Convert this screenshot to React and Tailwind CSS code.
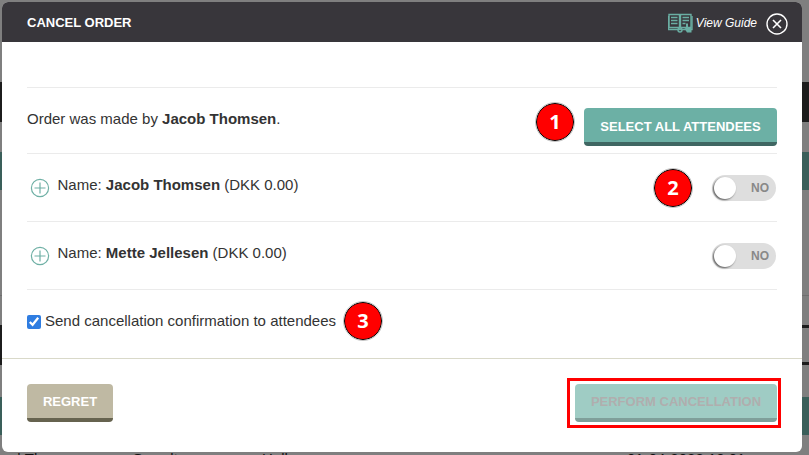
import React from 'react';

const FONT = "font-['Liberation_Sans',Arial,sans-serif]";

const Badge = ({ n }) => (
    <div className="w-[38px] h-[38px] shrink-0 rounded-full bg-[#ff0000] border-[1.5px] border-black outline outline-1 outline-[#c4c4c4] flex items-center justify-center text-white font-bold text-[20px] font-['Open_Sans',sans-serif]">
        {n}
    </div>
);

const PlusIcon = () => (
    <svg width="20" height="20" viewBox="0 0 20 20" fill="none" stroke="#6fb0a5" strokeWidth="1.2" className="shrink-0">
        <circle cx="10" cy="10" r="8.6" />
        <path d="M10 4.5v11M4.5 10h11" />
    </svg>
);

const GuideIcon = () => (
    <svg width="25" height="20" viewBox="0 0 25 20" fill="none" stroke="#6aaea3" strokeWidth="1.4">
        <path d="M1 1.5h10.5v13H1zM12.5 1.5H23v13H12.5z" />
        <path d="M0.5 3v13.5h23.500V3" />
        <path d="M3 4.500h6.500M3 7.500h6.500M3 10.500h6.500M14.500 4.500h6.500M14.500 7.500h6.500M14.500 10.500h3" />
        <circle cx="12" cy="17" r="2" />
        <path d="M18 10.500h2v3.500l3.500 1v4.500h-4.500l-2.500-4 1.500-.5z" fill="#6aaea3" stroke="none" />
    </svg>
);

const CloseIcon = () => (
    <svg width="22" height="22" viewBox="0 0 22 22" fill="none" stroke="#ffffff" strokeWidth="1.4" className="mt-px">
        <circle cx="11" cy="11" r="10" />
        <path d="M7 7l8 8M15 7l-8 8" strokeWidth="1.6" />
    </svg>
);

const Toggle = () => (
    <div className="w-16 h-[26px] rounded-full bg-[#dedede] flex items-center justify-between pl-[2px] pr-[7px]">
        <div className="w-[22px] h-[22px] rounded-full bg-white shadow-[-1px_1px_2px_rgba(0,0,0,0.6)]"></div>
        <span className="text-xs font-bold text-[#888888]">NO</span>
    </div>
);

const AttendeeRow = ({ name, children }) => (
    <div className="h-[68px] border-b border-[#ebebeb] flex items-center justify-between">
        <div className="flex items-center pl-[3px] gap-[7.5px]">
            <PlusIcon />
            <span className="mb-1">
                Name: <b>{name}</b> (DKK 0.00)
            </span>
        </div>
        {children}
    </div>
);

const Backdrop = () => (
    <div className="h-[455px] bg-[#7f7f7f] overflow-hidden flex flex-col">
        <div className="h-[82px] shrink-0"></div>
        <div className="h-10 shrink-0 bg-[#1c1c1c]"></div>
        <div className="h-[30px] shrink-0"></div>
        <div className="h-[38px] shrink-0 bg-[#3a5f5a]"></div>
        <div className="h-[106px] shrink-0 border-b border-[#6f6f6f]"></div>
        <div className="h-[32px] shrink-0 border-b-[3px] border-[#1c1c1c]"></div>
        <div className="h-[37px] shrink-0 border-b-[3px] border-[#1c1c1c] flex">
            <div className="w-[2px] bg-[#1c1c1c]"></div>
        </div>
        <div className="h-8 shrink-0"></div>
        <div className="h-[38px] shrink-0 bg-[#3a5f5a]"></div>
        {/* page text peeking out under the modal */}
        <div className="h-[16px] shrink-0"></div>
        <div className="shrink-0 flex text-[15px] leading-none text-[#111111] whitespace-nowrap pl-[17px]">
            <span className="w-[115px]">| The</span>
            <span className="w-[130px]">Grandt</span>
            <span className="w-[365px]">Holbergsgave</span>
            <span>01-04-2023 10:01</span>
        </div>
    </div>
);

export default function App() {
    return (
        <div className={`relative w-[809px] h-[455px] overflow-hidden text-[15px] text-[#333333] ${FONT}`}>
            <Backdrop />

            {/* Modal */}
            <div className="absolute top-[2px] left-[2px] w-[800px] h-[450px] rounded-[6px] bg-white overflow-hidden flex flex-col">
                <div className="h-10 shrink-0 bg-[#38363b] text-white flex items-center justify-between pl-[25px] pr-[14px]">
                    <span className="text-[13px] font-bold mt-[2px]">CANCEL ORDER</span>
                    <div className="flex items-center mt-[2px]">
                        <GuideIcon />
                        <span className="italic text-xs ml-[3px] mr-[9px]">View Guide</span>
                        <CloseIcon />
                    </div>
                </div>

                <div className="px-[25px] pt-[45px] flex-1 border-b border-[#d9d9c9]">
                    <div className="h-[67px] border-y border-[#ebebeb] flex items-center justify-between">
                        <span className="mb-[2px]">
                            Order was made by <b>Jacob Thomsen</b>.
                        </span>
                        <div className="flex items-start gap-[10px] mt-2">
                            <Badge n="1" />
                            <button className="mt-[5px] pt-1 w-[193px] h-[38px] rounded-[4px] bg-[#6cb0a5] border-b-4 border-[#3f6662] text-white text-[13px] font-bold">
                                SELECT ALL ATTENDEES
                            </button>
                        </div>
                    </div>
                    <AttendeeRow name="Jacob Thomsen">
                        <div className="flex items-center gap-5 pr-px">
                            <Badge n="2" />
                            <Toggle />
                        </div>
                    </AttendeeRow>
                    <AttendeeRow name="Mette Jellesen">
                        <div className="pr-px">
                            <Toggle />
                        </div>
                    </AttendeeRow>
                    <div className="h-[61px] flex items-center">
                        <input type="checkbox" defaultChecked className="mt-[2px] w-[14px] h-[14px] accent-[#2f7de1]" />
                        <span className="ml-1 mt-[2px]">Send cancellation confirmation to attendees</span>
                        <div className="ml-[8px]">
                            <Badge n="3" />
                        </div>
                    </div>
                </div>

                <div className="h-[93px] shrink-0 px-[25px] flex items-start justify-between pt-[25px]">
                    <button className="pt-[2px] w-[86px] h-[38px] rounded-[4px] bg-[#bfb9a3] border-b-4 border-[#66634f] text-white text-[13px] font-bold">
                        REGRET
                    </button>
                    <div className="relative">
                        <button className="pt-[2px] w-[202px] h-[38px] rounded-[4px] bg-[#9fccc4] border-b-4 border-[#7f9f9a] text-[#b0aeae] text-[13px] font-bold">
                            PERFORM CANCELLATION
                        </button>
                        {/* highlight frame from the annotated screenshot */}
                        <div className="absolute -top-[6px] -left-[8px] -right-1 -bottom-[6px] border-[3px] border-[#ff0000]"></div>
                    </div>
                </div>
            </div>
        </div>
    );
}
